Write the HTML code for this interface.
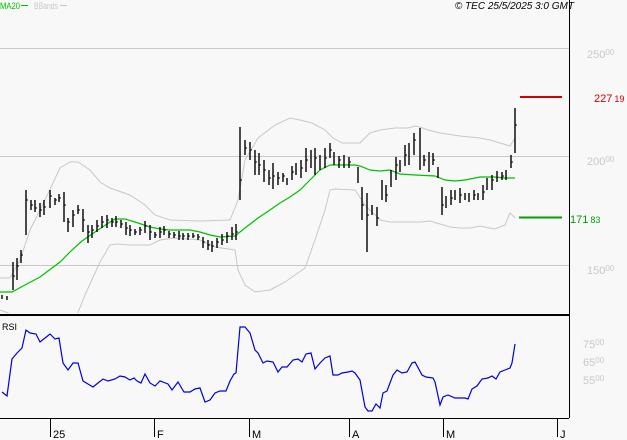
<!DOCTYPE html>
<html><head><meta charset="utf-8"><style>
html,body{margin:0;padding:0;background:#f8f8f8;}
svg{display:block;font-family:"Liberation Sans",sans-serif;}
</style></head><body>
<svg width="627" height="440" viewBox="0 0 627 440" xmlns="http://www.w3.org/2000/svg">
<defs><clipPath id="c"><rect x="0" y="0" width="569" height="313"/></clipPath></defs>
<rect width="627" height="440" fill="#f8f8f8"/>
<g stroke="#c8c8c8" stroke-width="1">
<line x1="0" y1="48.5" x2="569" y2="48.5"/>
<line x1="0" y1="156.5" x2="569" y2="156.5"/>
<line x1="0" y1="265.5" x2="569" y2="265.5"/>
</g>
<text x="0" y="9" font-size="9" fill="#00c000" textLength="20" lengthAdjust="spacingAndGlyphs">MA20</text>
<line x1="21" y1="5.5" x2="28" y2="5.5" stroke="#00c000"/>
<text x="34" y="9" font-size="9" fill="#c8c8c8" textLength="24" lengthAdjust="spacingAndGlyphs">BBands</text>
<line x1="60" y1="5.5" x2="67" y2="5.5" stroke="#c8c8c8"/>
<text x="574" y="9" font-size="10" font-style="italic" fill="#000" text-anchor="end">© TEC 25/5/2025 3:0 GMT</text>
<g clip-path="url(#c)">
<polyline fill="none" stroke="#c8c8c8" stroke-width="1" points="0,278 10,278 20,260 30,230 45,200 60,168 70,162 78,162 90,170 100,182 110,188 130,195 145,205 155,215 170,220 200,221 230,220 238,200 245,160 258,138 275,125 290,118 300,120 312,123 325,130 333,138 342,143 360,143 370,133 380,130 395,128 408,128 415,126 420,127 428,130 440,133 460,136 480,138 490,140 500,143 510,146 515,138"/>
<polyline fill="none" stroke="#c8c8c8" stroke-width="1" points="0,310 8,313 30,320 60,330 75,320 85,295 100,262 110,245 117,244 130,245 150,245 160,240 175,238 200,240 215,247 235,250 238,270 245,285 255,292 270,290 285,282 295,275 305,268 315,240 325,210 330,190 335,189 355,190 365,205 380,220 390,222 405,222 420,222 430,221 440,224 450,227 460,228 470,228 480,226 495,229 505,225 510,213 515,218"/>
</g>
<polyline fill="none" stroke="#00c000" stroke-width="1.2" points="0,292 12,292 25,285 40,277 60,262 72,250 82,241 95,232 110,222 115,219 125,219 135,222 150,227 160,229 170,230 190,230 200,232 210,235 220,237 235,236 245,228 258,218 270,210 280,203 290,197 300,190 310,180 320,170 330,165 355,165 360,166 370,170 380,171 390,170 400,174 415,175 435,176 445,180 455,181 465,180 480,177 495,177 505,178 515,178"/>
<path fill="none" stroke="#000" stroke-width="1.4" d="
M2,295V299M7,296V300M13,262V290M17,258V280M21,250V263M26,190V235M31,200V210M35,200V212M40,203V217M44,200V215M50,190V208M55,198V205M59,194V202M64,192V222M68,218V232M73,210V227M78,205V214M83,209V232M88,225V243M92,225V238M97,220V232M102,216V228M107,215V228M112,218V227M116,216V227M121,220V228M126,222V235M130,225V236M135,229V235M140,227V235M145,221V233M150,225V240M155,232V238M160,227V238M164,226V235M169,231V238M174,232V238M179,231V240M183,233V240M188,233V240M193,233V238M198,234V240M203,237V248M208,240V250M212,241V252M217,238V248M222,234V245M227,232V243M232,227V240M236,224V240M240,127V200M245,140V155M250,142V160M255,150V175M259,153V175M264,160V182M269,170V185M273,163V189M278,172V185M283,173V182M287,178V185M292,166V180M296,163V175M301,160V178M306,148V172M311,150V168M315,148V175M320,155V170M325,148V168M330,143V158M334,152V165M339,156V168M344,155V168M349,157V168M358,167V183M362,187V220M367,193V252M372,205V215M377,207V226M382,180V200M386,185V202M391,170V187M396,157V180M400,160V172M405,145V166M409,143V165M414,133V155M420,128V170M424,155V166M429,152V172M433,153V165M438,167V178M442,187V215M446,196V208M451,190V205M455,190V200M460,188V203M465,193V200M469,193V202M474,190V200M478,193V200M483,185V200M487,178V190M492,175V190M497,171V182M502,172V180M506,170V180M511,155V168M515,108V153"/>
<path fill="none" stroke="#000" stroke-width="1" d="
M13,276h2M17,266h2M21,255h2M26,200h2M31,205h2M35,208h2M40,210h2M44,207h2M50,196h2M55,200h2M59,198h2M64,205h2M68,222h2M73,215h2M78,210h2M83,220h2M88,232h2M92,230h2M97,226h2M102,222h2M107,220h2M112,222h2M116,222h2M121,224h2M126,228h2M130,230h2M135,232h2M140,230h2M145,226h2M150,232h2M155,235h2M160,232h2M164,230h2M169,234h2M174,235h2M179,236h2M183,236h2M188,236h2M193,236h2M198,237h2M203,242h2M208,245h2M212,246h2M217,242h2M222,240h2M227,236h2M232,234h2M236,232h2M240,180h2M245,148h2M250,150h2M255,162h2M259,165h2M264,170h2M269,178h2M273,176h2M278,178h2M283,176h2M292,172h2M301,168h2M306,160h2M315,158h2M325,158h2M330,150h2M339,160h2M349,162h2M362,205h2M367,215h2M377,218h2M386,195h2M396,165h2M405,155h2M414,140h2M424,160h2M433,160h2M442,205h2M451,198h2M460,195h2M474,195h2M483,192h2M492,180h2M502,176h2M511,162h2M515,125h2"/>
<line x1="520" y1="97" x2="562" y2="97" stroke="#d00000" stroke-width="2"/>
<line x1="519" y1="217.5" x2="562" y2="217.5" stroke="#00a000" stroke-width="2"/>
<line x1="569.5" y1="0" x2="569.5" y2="418" stroke="#000" stroke-width="1"/>
<line x1="0" y1="315" x2="569" y2="315" stroke="#000" stroke-width="2"/>
<line x1="0" y1="418.5" x2="569" y2="418.5" stroke="#000" stroke-width="1"/>
<g stroke="#000" stroke-width="1">
<line x1="50.5" y1="418" x2="50.5" y2="437"/>
<line x1="154.5" y1="418" x2="154.5" y2="437"/>
<line x1="249.5" y1="418" x2="249.5" y2="437"/>
<line x1="349.5" y1="418" x2="349.5" y2="437"/>
<line x1="443.5" y1="418" x2="443.5" y2="437"/>
<line x1="557.5" y1="418" x2="557.5" y2="437"/>
</g>
<g font-size="11" fill="#000">
<text x="53" y="438">25</text>
<text x="157" y="438">F</text>
<text x="252" y="438">M</text>
<text x="352" y="438">A</text>
<text x="446" y="438">M</text>
<text x="560" y="438">J</text>
</g>
<g font-size="11" fill="#c8c8c8">
<text x="587" y="58">250<tspan font-size="8" dy="-3">00</tspan></text>
<text x="587" y="165">200<tspan font-size="8" dy="-3">00</tspan></text>
<text x="587" y="274">150<tspan font-size="8" dy="-3">00</tspan></text>
<text x="583" y="348">75<tspan font-size="8" dy="-3">00</tspan></text>
<text x="583" y="366">65<tspan font-size="8" dy="-3">00</tspan></text>
<text x="583" y="384">55<tspan font-size="8" dy="-3">00</tspan></text>
</g>
<text x="594" y="102" font-size="11" fill="#d00000">227<tspan font-size="9" dx="2">19</tspan></text>
<text x="570" y="223" font-size="11" fill="#00a000">171<tspan font-size="9" dx="2">83</tspan></text>
<text x="2" y="330" font-size="9" fill="#000">RSI</text>
<polyline fill="none" stroke="#0000e0" stroke-width="1.2" points="2,392 7,396 12,359 17,353 22,348 26,330 30,333 36,334 40,342 45,338 50,334 55,339 59,338 63,363 68,370 73,363 78,363 83,381 88,384 93,387 98,383 103,379 108,381 115,379 120,376 125,377 130,380 134,378 137,381 141,383 145,374 150,383 155,386 160,381 168,384 172,390 178,382 184,392 190,392 195,389 200,388 205,402 210,400 215,393 220,391 226,391 230,381 234,374 236,373 240,327 245,327 250,333 255,350 258,353 263,363 267,361 273,362 278,372 282,367 287,367 293,360 298,359 302,362 306,354 311,353 315,369 320,363 325,358 330,356 333,375 338,375 342,373 348,372 352,371 355,373 360,380 365,407 368,411 372,411 376,404 380,408 383,393 387,391 393,375 397,370 402,373 407,372 412,363 415,362 422,375 426,377 433,378 435,382 440,405 443,397 448,395 455,398 465,398 468,399 472,389 477,386 482,379 488,378 492,376 496,379 500,372 505,370 510,368 512,363 515,344"/>
</svg>
</body></html>
